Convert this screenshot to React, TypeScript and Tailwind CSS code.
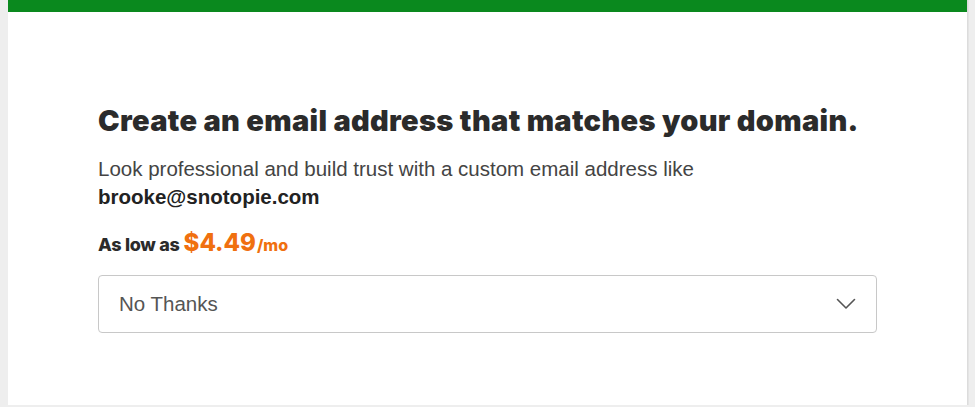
export default function App() {
	return (
		<div className="min-h-[407px] bg-[#eeeeee] px-2 pb-0.5">
			<div className="flex h-[405px] flex-col bg-white shadow-[1px_0_0_#dcdcdc,2px_0_0_#e4e4e4]">
				<div className="h-3 bg-[#0a891e]" />
				<div className="px-[90px] pt-[91px]">
					<h2
						className="text-[29px] font-black leading-[36px] tracking-[0.32px] text-[#2b2b2b]"
						style={{ fontFamily: "Inter, 'Noto Sans', sans-serif" }}
					>
						Create an email address that matches your domain.
					</h2>
					<p
						className="mt-[16px] text-[20.5px] leading-[28px] text-[#444444]"
						style={{ fontFamily: "'Liberation Sans', Arial, sans-serif" }}
					>
						Look professional and build trust with a custom email address like
						<br />
						<span className="font-bold text-[#222222]">brooke@snotopie.com</span>
					</p>
					<div
						className="mt-[18px] flex items-baseline font-extrabold text-[#2b2b2b]"
						style={{ fontFamily: "Inter, 'Noto Sans', sans-serif" }}
					>
						<span className="text-[18px] tracking-[-0.3px]">As low as</span>
						<span className="ml-[4px] text-[24px] leading-[28px] text-[#f0700f]">$4.49</span>
						<span className="ml-[1px] text-[16px] text-[#f0700f]">/mo</span>
					</div>
					<button
						type="button"
						className="mt-[17px] flex h-[58px] w-full items-center justify-between rounded-[4px] border border-[#c8c8c8] pl-5 pr-5 text-left text-[20.5px] text-[#555555]"
						style={{ fontFamily: "'Liberation Sans', Arial, sans-serif" }}
					>
						<span>No Thanks</span>
						<svg width="20" height="12" viewBox="0 0 20 12" fill="none">
							<path d="M1.5 1.5 L10 10 L18.5 1.5" stroke="#555555" strokeWidth="1.6" strokeLinecap="round" strokeLinejoin="round" />
						</svg>
					</button>
				</div>
			</div>
		</div>
	);
}
